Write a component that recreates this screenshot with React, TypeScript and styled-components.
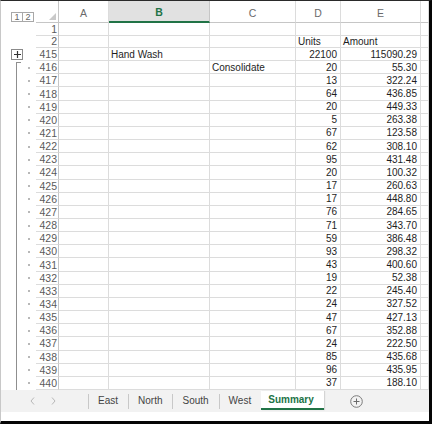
import React from "react";
import styled, { createGlobalStyle } from "styled-components";

const Global = createGlobalStyle`
  html, body { margin: 0; padding: 0; background: #fff; }
  body { font-family: "Liberation Sans", Arial, sans-serif; }
  * { box-sizing: border-box; }
`;

const COLS = "35px 23px 50px 101px 86px 45px 80px 1fr";
const GREEN = "#217346";

const Frame = styled.div`
  width: 432px;
  height: 424px;
  border-top: 1px solid #2a2a2a;
  border-right: 3px solid #050505;
  border-bottom: 3px solid #050505;
  border-left: 1px solid #c8c8c8;
  display: flex;
  flex-direction: column;
  overflow: hidden;
  background: #fff;
`;

const HeaderRow = styled.div`
  display: grid;
  grid-template-columns: ${COLS};
  height: 22px;
  flex: none;
`;

const LevelCell = styled.div`
  display: flex;
  padding: 11px 0 0 10px;
`;

const LevelButton = styled.div`
  width: 12px;
  height: 10px;
  border: 1px solid #a8a8a8;
  margin-right: -1px;
  font-size: 9px;
  line-height: 8px;
  color: #666;
  text-align: center;
  background: #fff;
`;

const Corner = styled.div`
  border-bottom: 1px solid #c6c6c6;
  border-right: 1px solid #c6c6c6;
  display: flex;
  align-items: flex-end;
  justify-content: flex-end;
  padding: 0 2px 2px 0;
`;

const ColHead = styled.div<{ $active?: boolean }>`
  display: flex;
  align-items: flex-end;
  justify-content: center;
  padding-bottom: 3px;
  font-size: 10.5px;
  line-height: 11px;
  color: ${(p) => (p.$active ? GREEN : "#6a6a6a")};
  background: ${(p) => (p.$active ? "#e1e1e1" : "#fff")};
  border-right: 1px solid ${(p) => (p.$active ? "#c6c6c6" : "#dcdcdc")};
  border-bottom: ${(p) => (p.$active ? `2px solid ${GREEN}` : "1px solid #c6c6c6")};
  font-weight: ${(p) => (p.$active ? 700 : 400)};
`;

const Body = styled.div`
  display: grid;
  grid-template-rows: 12px 13px repeat(26, 1fr);
  height: 367px;
  flex: none;
`;

const Row = styled.div`
  display: grid;
  grid-template-columns: ${COLS};
  min-height: 0;
`;

const OutlineCell = styled.div`
  position: relative;
  display: flex;
  align-items: center;
`;

const PlusBox = styled.div`
  margin-left: 10px;
  width: 12px;
  height: 11px;
  border: 1px solid #8a8a8a;
  background: #fff;
  display: flex;
  align-items: center;
  justify-content: center;
`;

const Bracket = styled.div<{ $first?: boolean }>`
  position: absolute;
  left: 15px;
  top: ${(p) => (p.$first ? "1px" : "0")};
  bottom: 0;
  width: 5px;
  border-left: 1px solid #8f8f8f;
  border-top: ${(p) => (p.$first ? "1px solid #8f8f8f" : "none")};
`;

const Dot = styled.div`
  position: absolute;
  left: 27px;
  top: 50%;
  width: 2px;
  height: 2px;
  margin-top: -1px;
  background: #b8b8b8;
`;

const RowNum = styled.div`
  border-bottom: 1px solid #dcdcdc;
  border-right: 1px solid #c6c6c6;
  font-size: 10.5px;
  color: #5a5a5a;
  display: flex;
  align-items: center;
  justify-content: flex-end;
  padding-right: 1px;
  white-space: nowrap;
  overflow: visible;
`;

const Cell = styled.div<{ $right?: boolean }>`
  border-bottom: 1px solid #dcdcdc;
  border-right: 1px solid #dcdcdc;
  font-size: 10px;
  color: #1e1e1e;
  display: flex;
  align-items: center;
  justify-content: ${(p) => (p.$right ? "flex-end" : "flex-start")};
  padding: 0 3px 0 2px;
  white-space: nowrap;
  overflow: visible;
  min-width: 0;
`;

const TabBar = styled.div`
  height: 22px;
  flex: none;
  background: #f2f2f2;
  display: flex;
  align-items: center;
`;

const Nav = styled.div`
  width: 87px;
  display: flex;
  align-items: center;
  padding-left: 29px;
  gap: 16px;
`;

const Sep = styled.div`
  width: 1px;
  height: 15px;
  background: #c8c8c8;
`;

const Tab = styled.div`
  padding: 0 10px 0 9px;
  font-size: 10px;
  color: #444;
  line-height: 22px;
`;

const ActiveTab = styled.div`
  align-self: flex-start;
  margin-top: 1px;
  height: 19px;
  padding: 0 10px 0 7px;
  background: #fff;
  border-bottom: 2px solid ${GREEN};
  color: ${GREEN};
  font-weight: 700;
  font-size: 10px;
  line-height: 18px;
  box-shadow: 1px 0 1px rgba(0, 0, 0, 0.12);
`;

const AddSheet = styled.div`
  margin-left: 26px;
  display: flex;
  align-items: center;
`;

const Spacer = styled.div`
  flex: 1;
  background: #fff;
`;

const data: [number, number, string][] = [
  [417, 13, "322.24"],
  [418, 64, "436.85"],
  [419, 20, "449.33"],
  [420, 5, "263.38"],
  [421, 67, "123.58"],
  [422, 62, "308.10"],
  [423, 95, "431.48"],
  [424, 20, "100.32"],
  [425, 17, "260.63"],
  [426, 17, "448.80"],
  [427, 76, "284.65"],
  [428, 71, "343.70"],
  [429, 59, "386.48"],
  [430, 93, "298.32"],
  [431, 43, "400.60"],
  [432, 19, "52.38"],
  [433, 22, "245.40"],
  [434, 24, "327.52"],
  [435, 47, "427.13"],
  [436, 67, "352.88"],
  [437, 24, "222.50"],
  [438, 85, "435.68"],
  [439, 96, "435.95"],
  [440, 37, "188.10"],
];

type RowData = {
  num: string;
  outline: "none" | "plus" | "first" | "line";
  b?: string;
  c?: string;
  d?: string;
  e?: string;
  dLeft?: boolean;
  eLeft?: boolean;
};

const rows: RowData[] = [
  { num: "1", outline: "none" },
  { num: "2", outline: "none", d: "Units", e: "Amount", dLeft: true, eLeft: true },
  { num: "415", outline: "plus", b: "Hand Wash", d: "22100", e: "115090.29" },
  { num: "416", outline: "first", c: "Consolidate", d: "20", e: "55.30" },
  ...data.map(([n, d, e]) => ({
    num: String(n),
    outline: "line" as const,
    d: String(d),
    e,
  })),
];

const Chevron = ({ dir }: { dir: "left" | "right" }) => (
  <svg width="5" height="8" viewBox="0 0 5 8">
    <path
      d={dir === "left" ? "M4 0.5 L1 4 L4 7.5" : "M1 0.5 L4 4 L1 7.5"}
      fill="none"
      stroke="#b8b8b8"
      strokeWidth="1"
    />
  </svg>
);

export default function App() {
  return (
    <>
      <Global />
      <Frame>
        <HeaderRow>
          <LevelCell>
            <LevelButton>1</LevelButton>
            <LevelButton>2</LevelButton>
          </LevelCell>
          <Corner>
            <svg width="7" height="7" viewBox="0 0 7 7">
              <polygon points="7,0 7,7 0,7" fill="#c9c9c9" />
            </svg>
          </Corner>
          <ColHead>A</ColHead>
          <ColHead $active>B</ColHead>
          <ColHead>C</ColHead>
          <ColHead>D</ColHead>
          <ColHead>E</ColHead>
          <ColHead />
        </HeaderRow>
        <Body>
          {rows.map((r) => (
            <Row key={r.num}>
              <OutlineCell>
                {r.outline === "plus" && (
                  <PlusBox>
                    <svg width="7" height="7" viewBox="0 0 7 7">
                      <path d="M3.5 0 V7 M0 3.5 H7" stroke="#333" strokeWidth="1.2" />
                    </svg>
                  </PlusBox>
                )}
                {(r.outline === "first" || r.outline === "line") && (
                  <>
                    <Bracket $first={r.outline === "first"} />
                    <Dot />
                  </>
                )}
              </OutlineCell>
              <RowNum>{r.num}</RowNum>
              <Cell />
              <Cell>{r.b}</Cell>
              <Cell>{r.c}</Cell>
              <Cell $right={!r.dLeft}>{r.d}</Cell>
              <Cell $right={!r.eLeft}>{r.e}</Cell>
              <Cell />
            </Row>
          ))}
        </Body>
        <TabBar>
          <Nav>
            <Chevron dir="left" />
            <Chevron dir="right" />
          </Nav>
          <Sep />
          <Tab>East</Tab>
          <Sep />
          <Tab>North</Tab>
          <Sep />
          <Tab>South</Tab>
          <Sep />
          <Tab>West</Tab>
          <ActiveTab>Summary</ActiveTab>
          <AddSheet>
            <svg width="13" height="13" viewBox="0 0 13 13">
              <circle cx="6.5" cy="6.5" r="5.8" fill="none" stroke="#7a7a7a" strokeWidth="1" />
              <path d="M6.5 3.5 V9.5 M3.5 6.5 H9.5" stroke="#6a6a6a" strokeWidth="1" />
            </svg>
          </AddSheet>
        </TabBar>
        <Spacer />
      </Frame>
    </>
  );
}
